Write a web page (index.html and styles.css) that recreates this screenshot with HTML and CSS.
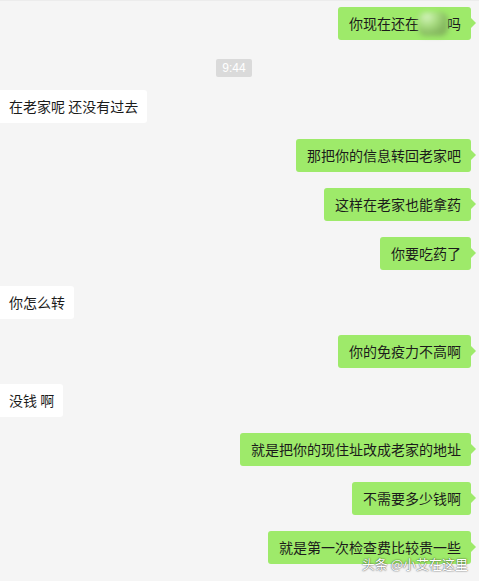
FILE: index.html
```html
<!DOCTYPE html>
<html lang="zh-CN">
<head>
  <meta charset="UTF-8">
  <meta name="viewport" content="width=device-width, initial-scale=1">
  <title>聊天记录</title>
  <link rel="stylesheet" href="styles.css">
</head>
<body>

  <div class="chat">
    <div class="row me first">
      <div class="bubble">你现在还在<span class="blur"></span>吗</div>
    </div>

    <div class="time-row"><span class="time">9:44</span></div>

    <div class="row other">
      <div class="bubble">在老家呢 还没有过去</div>
    </div>
    <div class="row me">
      <div class="bubble">那把你的信息转回老家吧</div>
    </div>
    <div class="row me">
      <div class="bubble">这样在老家也能拿药</div>
    </div>
    <div class="row me">
      <div class="bubble">你要吃药了</div>
    </div>
    <div class="row other">
      <div class="bubble">你怎么转</div>
    </div>
    <div class="row me">
      <div class="bubble">你的免疫力不高啊</div>
    </div>
    <div class="row other">
      <div class="bubble">没钱 啊</div>
    </div>
    <div class="row me">
      <div class="bubble">就是把你的现住址改成老家的地址</div>
    </div>
    <div class="row me">
      <div class="bubble">不需要多少钱啊</div>
    </div>
    <div class="row me">
      <div class="bubble">就是第一次检查费比较贵一些</div>
    </div>
  </div>

  <div class="watermark">头条 @小艾在这里</div>

</body>
</html>
```

FILE: styles.css
```css
:root {
  --bg-color: #f5f5f5;
  --me-color: #9eea6a;
  --other-color: #ffffff;
  --text-color: #1b1b1b;
  --time-bg: #dadada;
}

* {
  box-sizing: border-box;
  margin: 0;
  padding: 0;
}

body {
  background-color: var(--bg-color);
  color: var(--text-color);
  font-family: "Noto Sans CJK SC", "Microsoft YaHei", sans-serif;
  font-size: 14px;
  width: 479px;
  height: 581px;
  overflow: hidden;
  position: relative;
  border-top: 1px solid #ececec;
}

.chat {
  display: flex;
  flex-direction: column;
  padding-top: 6px;
}

.row {
  display: flex;
  margin-bottom: 16px;
}

.row.me {
  justify-content: flex-end;
  padding-right: 8px;
}

.row.other {
  justify-content: flex-start;
}

.bubble {
  position: relative;
  height: 33px;
  line-height: 33px;
  padding: 0 10px;
  border-radius: 3px;
  white-space: nowrap;
  display: flex;
  align-items: center;
}

.me .bubble {
  background-color: var(--me-color);
  padding: 0 10px 0 11px;
}

.me .bubble::after {
  content: "";
  position: absolute;
  right: -5px;
  top: 11px;
  border-left: 5px solid var(--me-color);
  border-top: 5px solid transparent;
  border-bottom: 5px solid transparent;
}

.other .bubble {
  background-color: var(--other-color);
  border-radius: 0 3px 3px 0;
  padding: 0 9px;
}

.blur {
  display: inline-block;
  width: 30px;
  height: 24px;
  margin: 0 -1px;
  background: radial-gradient(ellipse at 30% 20%, #d4f4bd 0%, #a8dc80 35%, #86b960 65%, #7fae5a 100%);
  filter: blur(2.5px);
  border-radius: 8px;
}

.time-row {
  display: flex;
  justify-content: center;
  margin: 3px 11px 13px 0;
}

.time {
  background-color: var(--time-bg);
  color: #ffffff;
  font-size: 12px;
  line-height: 18px;
  height: 18px;
  padding: 0 6px;
  border-radius: 2px;
  font-family: "Liberation Sans", Arial, sans-serif;
}

.watermark {
  position: absolute;
  right: 11px;
  bottom: 8px;
  color: #ffffff;
  font-size: 13px;
  text-shadow: 0 0 2px rgba(0, 0, 0, 0.55), 0 0 1px rgba(0, 0, 0, 0.6);
}
```
